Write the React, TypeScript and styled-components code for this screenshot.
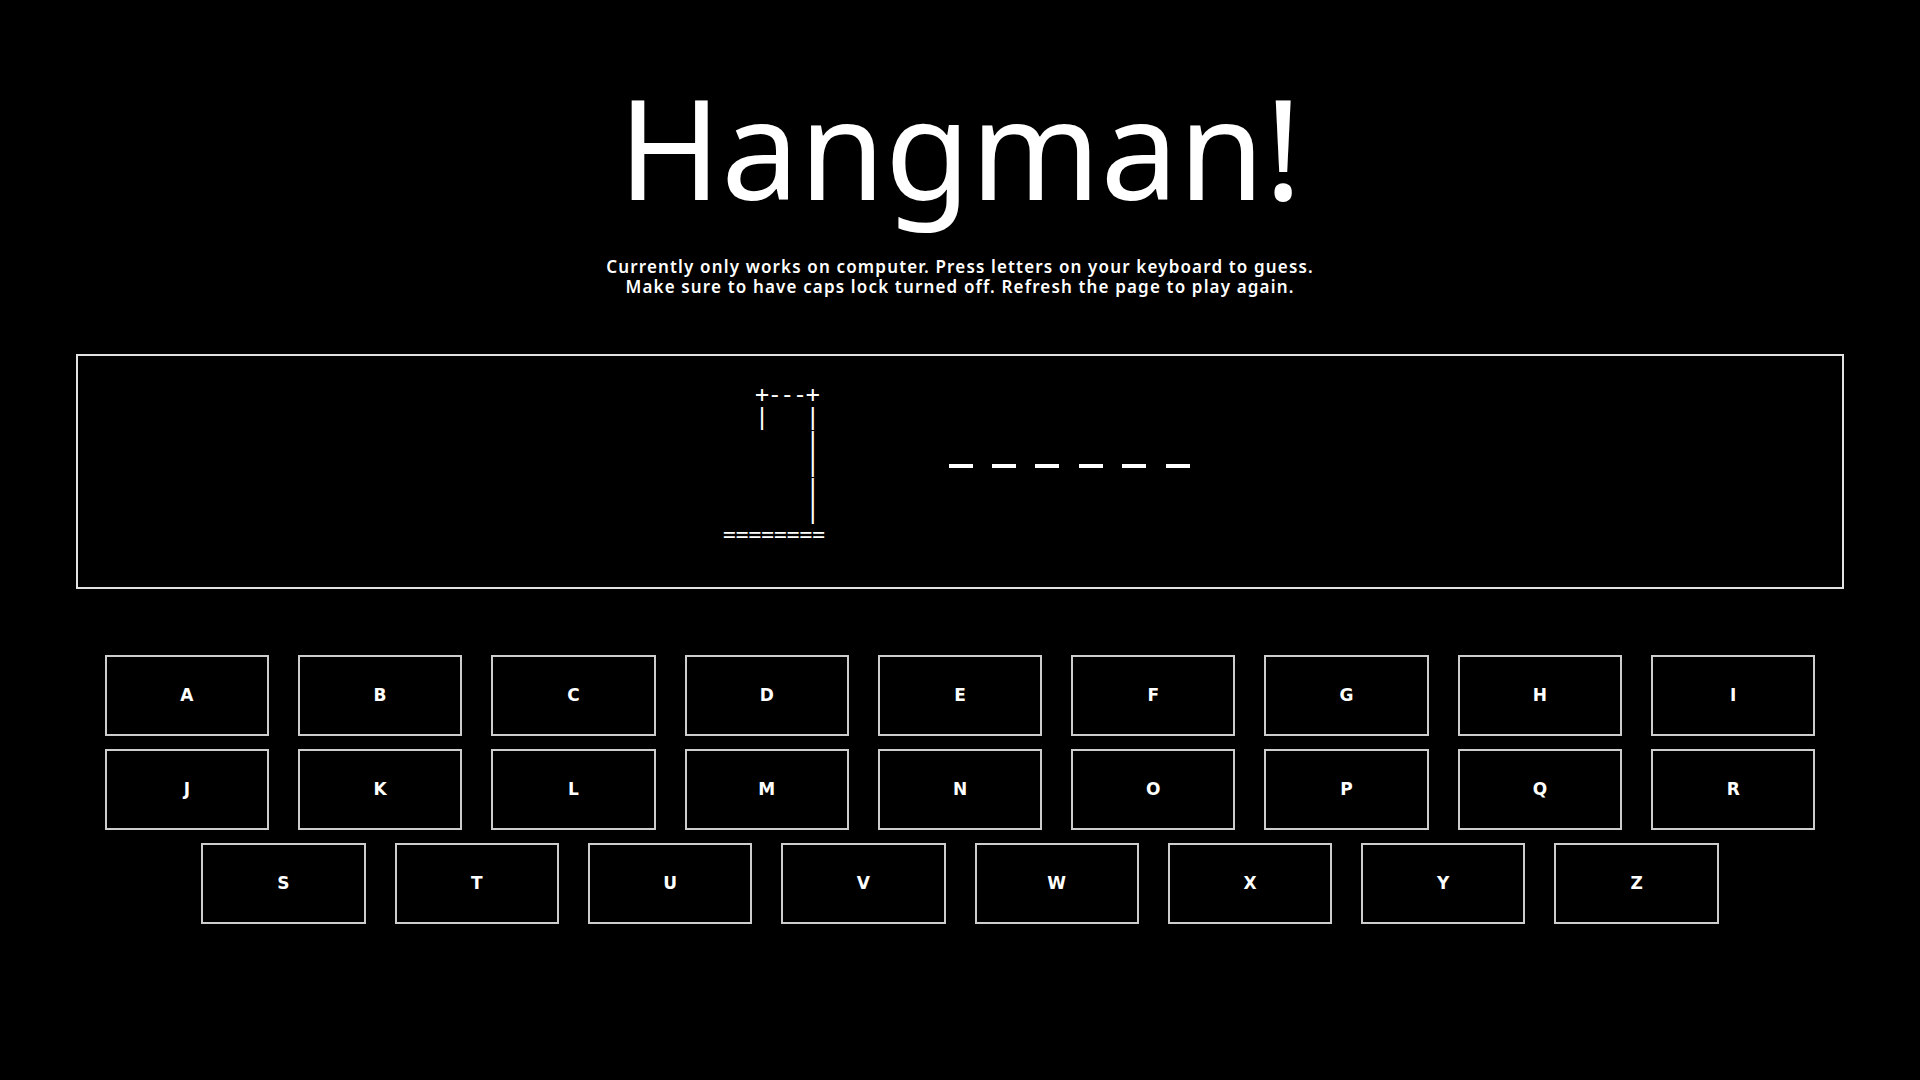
import React from "react";
import styled, { createGlobalStyle } from "styled-components";

const GlobalStyle = createGlobalStyle`
  html, body {
    margin: 0;
    padding: 0;
    background: #000;
    color: #fff;
    font-family: "Noto Sans", "DejaVu Sans", sans-serif;
  }
`;

const Page = styled.main`
  min-height: 1080px;
  display: flex;
  flex-direction: column;
  align-items: center;
  padding-top: 77px;
  box-sizing: border-box;
`;

const Title = styled.h1`
  margin: 0;
  font-family: "Noto Sans", sans-serif;
  font-size: 139px;
  line-height: 139px;
  font-weight: 400;
  color: #fff;
`;

const Subtitle = styled.p`
  margin: 41px 0 0;
  font-family: "Noto Sans", sans-serif;
  font-size: 17px;
  line-height: 20px;
  font-weight: 600;
  letter-spacing: 1.15px;
  text-align: center;
  color: #fff;
`;

const GameBox = styled.section`
  margin-top: 57px;
  width: 1768px;
  box-sizing: border-box;
  border: 2px solid #e2e2e2;
  padding: 27px 7.5px 40px 0;
  display: flex;
  justify-content: center;
  align-items: center;
  gap: 123.5px;
`;

const Gallows = styled.pre`
  margin: 0;
  font-family: "DejaVu Sans Mono", "Liberation Mono", monospace;
  font-size: 23.4px;
  line-height: 23.4px;
  letter-spacing: -1.35px;
  text-align: center;
  color: #fff;
`;

const Ground = styled.span`
  font-size: 21.2px;
  letter-spacing: 0;
`;

const Word = styled.div`
  display: flex;
  gap: 19.4px;
  margin-top: 1.5px;
`;

const Slot = styled.span`
  display: block;
  width: 24px;
  height: 0;
  border-bottom: 4px solid #fff;
`;

const Keyboard = styled.div`
  margin-top: 66px;
  width: 1768px;
  display: flex;
  flex-wrap: wrap;
  justify-content: center;
  gap: 13px 29px;
`;

const Key = styled.button`
  width: 164.3px;
  height: 81px;
  box-sizing: border-box;
  background: #000;
  color: #fff;
  border: 2px solid #cdcdcd;
  border-radius: 0;
  font-family: "DejaVu Sans", Verdana, sans-serif;
  font-weight: 700;
  font-size: 17px;
  cursor: pointer;
  padding: 0;
`;

const gallowsTop = ["  +---+", "  |   |", "      |", "      |", "      |", "      |", ""].join("\n");

const letters = "ABCDEFGHIJKLMNOPQRSTUVWXYZ".split("");

export default function App() {
  return (
    <>
      <GlobalStyle />
      <Page>
        <Title>Hangman!</Title>
        <Subtitle>
          Currently only works on computer. Press letters on your keyboard to guess.
          <br />
          Make sure to have caps lock turned off. Refresh the page to play again.
        </Subtitle>
        <GameBox>
          <Gallows>
            {gallowsTop}
            <Ground>========</Ground>
          </Gallows>
          <Word>
            {Array.from({ length: 6 }).map((_, i) => (
              <Slot key={i} />
            ))}
          </Word>
        </GameBox>
        <Keyboard>
          {letters.map((l) => (
            <Key key={l}>{l}</Key>
          ))}
        </Keyboard>
      </Page>
    </>
  );
}
